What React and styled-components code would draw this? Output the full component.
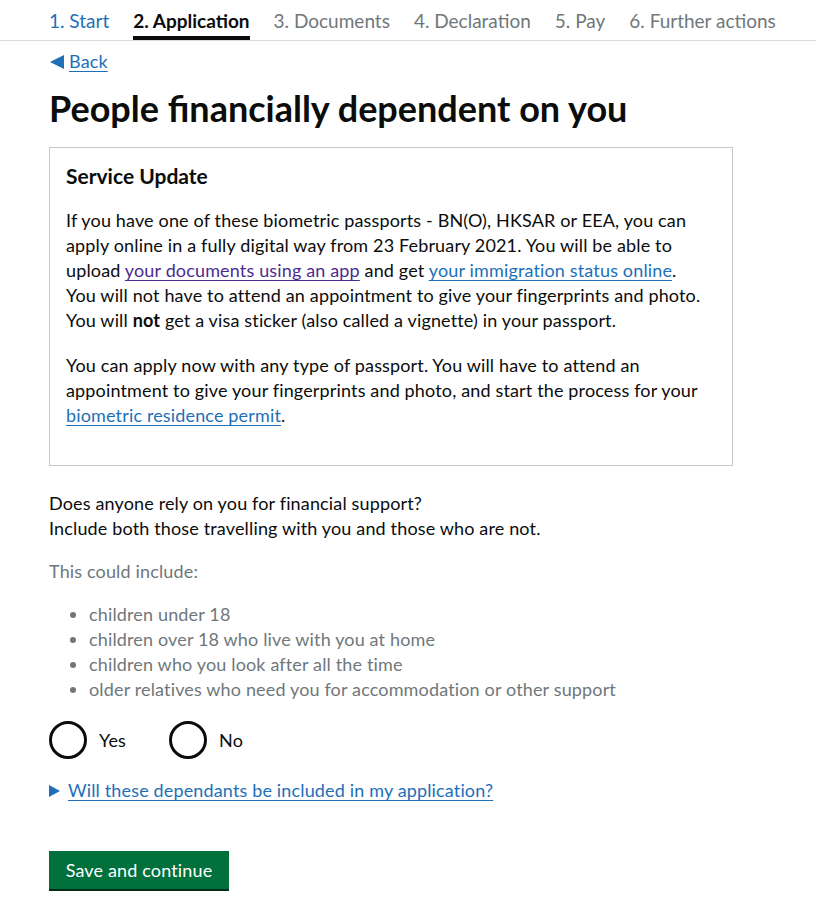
import styled, { createGlobalStyle } from "styled-components";

const GlobalStyle = createGlobalStyle`
  html, body {
    margin: 0;
    padding: 0;
    background: #ffffff;
  }
  body {
    font-family: Lato, "Liberation Sans", sans-serif;
    color: #0b0c0c;
    letter-spacing: 0.15px;
    -webkit-font-smoothing: antialiased;
  }
`;

const steps = [
  { label: "1. Start", state: "done" },
  { label: "2. Application", state: "current" },
  { label: "3. Documents", state: "todo" },
  { label: "4. Declaration", state: "todo" },
  { label: "5. Pay", state: "todo" },
  { label: "6. Further actions", state: "todo" },
];

const bullets = [
  "children under 18",
  "children over 18 who live with you at home",
  "children who you look after all the time",
  "older relatives who need you for accommodation or other support",
];

export default function App() {
  return (
    <>
      <GlobalStyle />
      <StepNav>
        {steps.map((s) => (
          <Step key={s.label} $state={s.state}>
            {s.label}
          </Step>
        ))}
      </StepNav>

      <Main>
        <BackLink href="#">
          <BackArrow />
          <span>Back</span>
        </BackLink>

        <Title>People financially dependent on you</Title>

        <Panel>
          <PanelHeading>Service Update</PanelHeading>
          <Body>
            If you have one of these biometric passports - BN(O), HKSAR or EEA,
            you can
            <br />
            apply online in a fully digital way from 23 February 2021. You will
            be able to
            <br />
            upload{" "}
            <Link href="#" $visited>
              your documents using an app
            </Link>{" "}
            and get <Link href="#">your immigration status online</Link>.
            <br />
            You will not have to attend an appointment to give your fingerprints
            and photo.
            <br />
            You will <strong>not</strong> get a visa sticker (also called a
            vignette) in your passport.
          </Body>
          <Body>
            You can apply now with any type of passport. You will have to attend
            an
            <br />
            appointment to give your fingerprints and photo, and start the
            process for your
            <br />
            <Link href="#">biometric residence permit</Link>.
          </Body>
        </Panel>

        <Question>
          Does anyone rely on you for financial support?
          <br />
          Include both those travelling with you and those who are not.
        </Question>

        <Hint>This could include:</Hint>
        <HintList>
          {bullets.map((b) => (
            <li key={b}>{b}</li>
          ))}
        </HintList>

        <Radios>
          <RadioItem>
            <RadioCircle />
            <span>Yes</span>
          </RadioItem>
          <RadioItem>
            <RadioCircle />
            <span>No</span>
          </RadioItem>
        </Radios>

        <Details>
          <SummaryArrow />
          <Link href="#">Will these dependants be included in my application?</Link>
        </Details>

        <Button type="button">Save and continue</Button>
      </Main>
    </>
  );
}

const StepNav = styled.nav`
  display: flex;
  gap: 24px;
  padding-left: 49px;
  border-bottom: 1px solid #dcdcdc;
`;

const Step = styled.div`
  padding: 8px 0 3px;
  font-size: 19px;
  line-height: 25px;
  letter-spacing: 0;
  white-space: nowrap;
  border-bottom: 4px solid
    ${(p) => (p.$state === "current" ? "#0b0c0c" : "transparent")};
  font-weight: ${(p) => (p.$state === "current" ? 700 : 400)};
  color: ${(p) =>
    p.$state === "done"
      ? "#1d70b8"
      : p.$state === "current"
      ? "#0b0c0c"
      : "#6f777b"};
`;

const Main = styled.main`
  padding: 8px 49px 40px;
  width: 684px;
`;

const BackLink = styled.a`
  display: inline-flex;
  align-items: center;
  gap: 5px;
  font-size: 18px;
  line-height: 25px;
  color: #1d70b8;
  text-decoration: underline;
  text-underline-offset: 3px;
`;

const BackArrow = styled.span`
  width: 0;
  height: 0;
  margin-left: 1px;
  border-top: 7px solid transparent;
  border-bottom: 7px solid transparent;
  border-right: 14px solid #1d70b8;
`;

const Title = styled.h1`
  margin: 14px 0 19px;
  font-size: 36px;
  line-height: 40px;
  font-weight: 700;
  letter-spacing: 0;
`;

const Panel = styled.section`
  border: 1px solid #c8c8c8;
  padding: 15px 16px 17px;
`;

const PanelHeading = styled.h2`
  margin: 0 0 20px;
  font-size: 21px;
  line-height: 25px;
  font-weight: 700;
  letter-spacing: 0;
`;

const Body = styled.p`
  margin: 0 0 20px;
  font-size: 18px;
  line-height: 25px;
  white-space: nowrap;

  strong {
    font-weight: 700;
  }
`;

const Link = styled.a`
  color: ${(p) => (p.$visited ? "#4c2c92" : "#1d70b8")};
  text-decoration: underline;
  text-underline-offset: 3px;
  text-decoration-thickness: 1px;
`;

const Question = styled.p`
  margin: 25px 0 18px;
  font-size: 18px;
  line-height: 25px;
`;

const Hint = styled.p`
  margin: 0 0 18px;
  font-size: 18px;
  line-height: 25px;
  color: #6f777b;
`;

const HintList = styled.ul`
  margin: 0 0 18px;
  padding-left: 40px;
  font-size: 18px;
  line-height: 25px;
  color: #6f777b;
`;

const Radios = styled.div`
  display: flex;
  gap: 43px;
  margin-bottom: 18px;
`;

const RadioItem = styled.label`
  display: flex;
  align-items: center;
  gap: 12px;
  font-size: 18px;
  line-height: 25px;
`;

const RadioCircle = styled.span`
  box-sizing: border-box;
  width: 38px;
  height: 38px;
  margin: 1px 0;
  border: 3px solid #0b0c0c;
  border-radius: 50%;
`;

const Details = styled.div`
  display: flex;
  align-items: center;
  gap: 8px;
  font-size: 18px;
  line-height: 25px;
  margin-bottom: 48px;
`;

const SummaryArrow = styled.span`
  width: 0;
  height: 0;
  border-top: 6px solid transparent;
  border-bottom: 6px solid transparent;
  border-left: 11px solid #1d70b8;
`;

const Button = styled.button`
  display: block;
  width: 180px;
  height: 38px;
  padding: 0;
  border: 0;
  background: #00703c;
  box-shadow: 0 2px 0 #002d18;
  color: #ffffff;
  font-family: inherit;
  font-size: 18px;
  letter-spacing: 0.15px;
  line-height: 38px;
  text-align: center;
`;
